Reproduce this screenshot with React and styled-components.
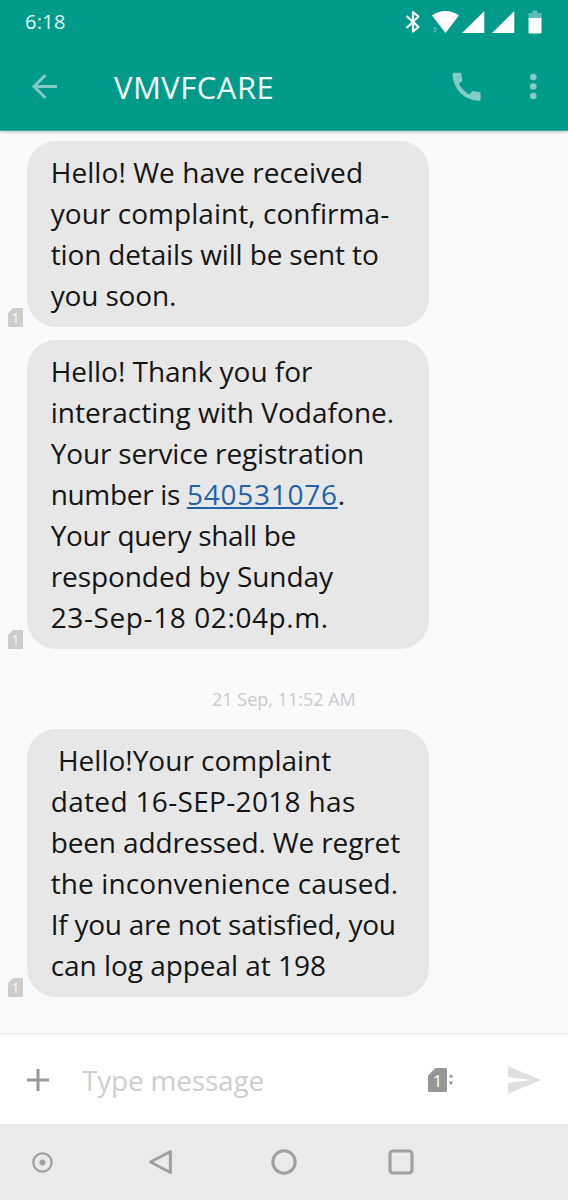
import React from "react";
import styled, { createGlobalStyle } from "styled-components";

const GlobalStyle = createGlobalStyle`
  * {
    box-sizing: border-box;
  }

  body {
    margin: 0;
    font-family: "Open Sans", "Noto Sans", sans-serif;
  }

  svg {
    display: block;
    flex-shrink: 0;
  }
`;

const Screen = styled.div`
  width: 568px;
  height: 1200px;
  display: flex;
  flex-direction: column;
  background-color: #fafafa;
  overflow: hidden;
`;

const Header = styled.header`
  height: 131px;
  flex-shrink: 0;
  background-color: #009a8b;
  border-bottom: 1px solid #3fa99f;
  box-shadow: 0px 1px 3px rgba(0, 0, 0, 0.25);
`;

const StatusBar = styled.div`
  height: 43px;
  display: flex;
  align-items: center;
  justify-content: space-between;
  padding: 0px 26px 0px 25px;
`;

const Time = styled.span`
  color: #e8fffb;
  font-size: 20px;
  line-height: 42px;
  letter-spacing: 0.3px;
`;

const StatusIcons = styled.div`
  display: flex;
  align-items: center;
`;

const AppBar = styled.div`
  height: 87px;
  display: flex;
  align-items: center;
  padding: 0px 16px 0px 25px;
`;

const Title = styled.h1`
  flex: 1;
  margin: 0px 0px 0px 51px;
  color: #f4fffd;
  font-size: 31px;
  font-weight: 400;
  line-height: 40px;
  letter-spacing: 0.5px;
`;

const Conversation = styled.main`
  flex: 1;
  display: flex;
  flex-direction: column;
  gap: 13px;
  padding: 10px 0px 0px 8px;
`;

const MessageRow = styled.div`
  display: flex;
  align-items: flex-end;
  gap: 4px;
`;

const Bubble = styled.div`
  width: 402px;
  padding: 11px 0px 11px 23.7px;
  border-radius: 29px;
  background-color: #e7e7e7;
`;

const Line = styled.span`
  display: block;
  color: #151515;
  font-size: 28px;
  line-height: 41px;
  white-space: pre;
  letter-spacing: ${(props) => props.$tracking || 0}px;
`;

const NumberLink = styled.a`
  color: #2361ab;
  letter-spacing: 0.75px;
  text-decoration: underline;
  text-decoration-thickness: 1.5px;
  text-underline-offset: 2px;
  text-decoration-skip-ink: none;
`;

const DateLabel = styled.div`
  height: 54px;
  padding: 21px 0px 0px 204px;
  color: #cbcbcb;
  font-size: 18px;
  line-height: 32px;
`;

const Composer = styled.div`
  height: 91px;
  flex-shrink: 0;
  display: flex;
  align-items: center;
  padding: 0px 27px 0px 26px;
  border-top: 2px solid #f0f0f0;
  background-color: #ffffff;
`;

const MessageInput = styled.input`
  flex: 1;
  min-width: 0;
  height: 60px;
  margin-left: 32px;
  padding: 0px;
  border: 0px;
  outline: none;
  background: transparent;
  font-family: "Open Sans", "Noto Sans", sans-serif;
  font-size: 28px;
  letter-spacing: -0.2px;

  &::placeholder {
    color: #cfcfcf;
    opacity: 1;
  }
`;

const NavBar = styled.nav`
  height: 76px;
  flex-shrink: 0;
  display: flex;
  align-items: center;
  padding-left: 32px;
  background-color: #eaeaea;
`;

const NavIcon = styled.svg`
  fill: none;
  stroke: #a0a0a0;
  stroke-linejoin: round;
  margin-left: ${(props) => props.$gap || 0}px;
`;

const SimNumber = styled.text`
  font-family: "Open Sans", "Noto Sans", sans-serif;
  font-size: ${(props) => props.$size}px;
  font-weight: ${(props) => props.$weight || 400};
  text-anchor: middle;
`;

// [text, letter spacing, linked number, text after it]
const messages = [
  {
    id: 1,
    lines: [
      ["Hello! We have received", 0.07],
      ["your complaint, confirma-", 0.05],
      ["tion details will be sent to", -0.15],
      ["you soon.", -0.15],
    ],
  },
  {
    id: 2,
    lines: [
      ["Hello! Thank you for", -0.03],
      ["interacting with Vodafone.", 0.02],
      ["Your service registration", -0.15],
      ["number is ", -0.33, "540531076", "."],
      ["Your query shall be", -0.33],
      ["responded by Sunday", -0.08],
      ["23-Sep-18 02:04p.m.", 0.6],
    ],
  },
  {
    id: 3,
    date: "21 Sep, 11:52 AM",
    lines: [
      [" Hello!Your complaint", 0],
      ["dated 16-SEP-2018 has", 0.33],
      ["been addressed. We regret", -0.13],
      ["the inconvenience caused.", 0.11],
      ["If you are not satisfied, you", -0.25],
      ["can log appeal at 198", -0.04],
    ],
  },
];

function StatusIconSet() {
  return (
    <StatusIcons>
      <svg width="137" height="26" viewBox="405 8 137 26" fill="#ffffff">
        <path
          d="M406.5 15l12 11-5.500 4.500V11l5.500 4.500L406.5 27"
          fill="none"
          stroke="#ffffff"
          strokeWidth="2.200"
          strokeLinejoin="round"
        />
        <path d="M432 14.5c8-6 19-6 27 0L445.500 32z" />
        <path d="M433 28.200l2-2.500 2 2.500zM433 29.500l2 2.500 2-2.500z" fill="#5fbdb3" />
        <path d="M484.300 10v22h-22.300z" />
        <path d="M514.300 10v22h-22.300z" />
        <path d="M532.500 9.500h5v2.500h4v5h-13v-5h4z" fill="#5fbdb3" />
        <path d="M528.500 17h13v14.500a1 1 0 0 1-1 1h-11a1 1 0 0 1-1-1z" />
      </svg>
    </StatusIcons>
  );
}

function SmallSim() {
  return (
    <svg width="15" height="19" viewBox="0 0 15 19">
      <path d="M5 0h9a1 1 0 0 1 1 1v17a1 1 0 0 1-1 1H1a1 1 0 0 1-1-1V5z" fill="#cdcdcd" />
      <SimNumber x="7.500" y="14.500" $size={14} fill="#f8f8f8">
        1
      </SimNumber>
    </svg>
  );
}

function Message({ lines }) {
  return (
    <MessageRow>
      <SmallSim />
      <Bubble>
        {lines.map(([text, tracking, link, rest]) => (
          <Line key={text} $tracking={tracking}>
            {text}
            {link && <NumberLink>{link}</NumberLink>}
            {rest}
          </Line>
        ))}
      </Bubble>
    </MessageRow>
  );
}

function App() {
  return (
    <>
      <GlobalStyle />
      <Screen>
        <Header>
          <StatusBar>
            <Time>6:18</Time>
            <StatusIconSet />
          </StatusBar>
          <AppBar>
            <svg width="38" height="38" viewBox="25 67.500 38 38" fill="none" stroke="#7fcdc5" strokeWidth="3">
              <path d="M57 86H34M45.500 74.500L34 86L45.500 97.500" />
            </svg>
            <Title>VMVFCARE</Title>
            <svg width="37.300" height="37.300" viewBox="0 0 24 24" fill="#7fcdc5">
              <path d="M20.010 15.380c-1.230 0-2.420-.2-3.530-.56-.35-.12-.74-.03-1.010.24l-1.570 1.970c-2.830-1.350-5.480-3.900-6.890-6.830l1.950-1.660c.27-.28.35-.67.24-1.020-.37-1.110-.56-2.300-.56-3.530 0-.54-.45-.99-.99-.99H4.190C3.650 3 3 3.240 3 3.990 3 13.280 10.730 21 20.010 21c.71 0 .99-.63.99-1.180v-3.450c0-.54-.45-.99-.99-.99z" />
            </svg>
            <svg width="67" height="38" viewBox="485 68 67 38" fill="#7fcdc5">
              <circle cx="533.300" cy="77" r="3.300" />
              <circle cx="533.300" cy="86.500" r="3.300" />
              <circle cx="533.300" cy="96" r="3.300" />
            </svg>
          </AppBar>
        </Header>
        <Conversation>
          {messages.map((message) => (
            <React.Fragment key={message.id}>
              {message.date && <DateLabel>{message.date}</DateLabel>}
              <Message lines={message.lines} />
            </React.Fragment>
          ))}
        </Conversation>
        <Composer>
          <svg width="24" height="24" viewBox="0 0 24 24" stroke="#999999" strokeWidth="3">
            <path d="M1 12h22M12 1v22" />
          </svg>
          <MessageInput placeholder="Type message" />
          <svg width="26" height="26" viewBox="0 0 26 26" fill="#969696">
            <path d="M7.500 1H17.500a1.500 1.500 0 0 1 1.500 1.500v21a1.500 1.500 0 0 1-1.500 1.500h-16a1.500 1.500 0 0 1-1.500-1.500V8.500z" />
            <path d="M20.800 10.500l2.200-3.800 2.200 3.800zM20.800 14.500l2.200 3.800 2.200-3.800z" />
            <SimNumber x="9.500" y="19.500" $size={17} $weight={500} fill="#ffffff">
              1
            </SimNumber>
          </svg>
          <svg width="87" height="30" viewBox="0 0 87 30" fill="#e0e0e0">
            <path d="M54 1l33 14-33 14V18l23-3-23-3z" />
          </svg>
        </Composer>
        <NavBar>
          <NavIcon width="21" height="21" viewBox="0 0 21 21" strokeWidth="2.200">
            <circle cx="10.500" cy="10.500" r="9.200" />
            <circle cx="10.500" cy="10.500" r="3" fill="#a0a0a0" stroke="none" />
          </NavIcon>
          <NavIcon $gap={95} width="26" height="26" viewBox="0 0 26 26" strokeWidth="3">
            <path d="M22.400 2.500v21L2.500 13z" />
          </NavIcon>
          <NavIcon $gap={97} width="26" height="26" viewBox="0 0 26 26" strokeWidth="3">
            <circle cx="13" cy="13" r="11.200" />
          </NavIcon>
          <NavIcon $gap={91} width="26" height="26" viewBox="0 0 26 26" strokeWidth="3.200">
            <rect x="2" y="2" width="22" height="22" rx="3" />
          </NavIcon>
        </NavBar>
      </Screen>
    </>
  );
}

export default App;
